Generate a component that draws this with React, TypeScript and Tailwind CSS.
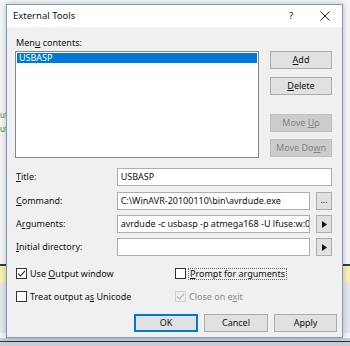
import type { ReactNode } from "react";

const font = { fontFamily: '"Noto Sans", "Open Sans", sans-serif' };

function Btn({ children, disabled, primary, className = "" }: { children: ReactNode; disabled?: boolean; primary?: boolean; className?: string }) {
  const tone = disabled
    ? "border-[#bfbfbf] bg-[#cccccc] text-[#838383]"
    : primary
      ? "border-[#0078d7] bg-[#e1e1e1] text-[#111]"
      : "border-[#adadad] bg-[#e1e1e1] text-[#111]";
  return (
    <div className={`flex h-[18px] items-center justify-center border text-[9px] ${tone} ${className}`}>
      {children}
    </div>
  );
}

function Check({ checked, disabled }: { checked?: boolean; disabled?: boolean }) {
  return (
    <div
      className={`flex h-[11px] w-[11px] shrink-0 items-center justify-center border ${
        disabled ? "border-[#d0d0d0] bg-[#f0f0f0]" : "border-[#333] bg-white"
      }`}
    >
      {checked && (
        <svg width="9" height="9" viewBox="0 0 9 9">
          <path d="M1 4.6 L3.4 7 L8 1.8" fill="none" stroke={disabled ? "#a8a8a8" : "#222"} strokeWidth="1.1" />
        </svg>
      )}
    </div>
  );
}

function Arrow() {
  return (
    <svg width="5" height="7" viewBox="0 0 5 7">
      <path d="M0 0 L5 3.5 L0 7 Z" fill="#111" />
    </svg>
  );
}

function Row({ label, children, className = "" }: { label: ReactNode; children: ReactNode; className?: string }) {
  return (
    <div className={`flex h-[18px] items-center ${className}`}>
      <div className="w-[102px] pl-[1px] text-[9px] text-[#111]">{label}</div>
      {children}
    </div>
  );
}

function Field({ value, className = "" }: { value?: string; className?: string }) {
  return (
    <div className={`flex h-[18px] items-center overflow-hidden whitespace-nowrap border border-[#abadb3] bg-white pl-[3px] text-[9px] text-[#111] ${className}`}>
      {value}
    </div>
  );
}

export default function App() {
  return (
    <div className="relative h-[346px] w-[350px] overflow-hidden bg-[#f5f6f7]" style={font}>
      {/* background app behind the dialog */}
      <div className="absolute left-0 top-[110px] h-[10px] text-[8px] leading-[10px] text-[#3a8a3a]">ut</div>
      <div className="absolute left-0 top-[124px] h-[10px] text-[8px] leading-[10px] text-[#3a8a3a]">ut</div>
      <div className="absolute left-0 right-0 top-[264px] h-[2px] bg-[#333a45]" />
      <div className="absolute left-0 right-0 top-[266px] h-[17px] bg-[#fbf0b0]" />
      <div className="absolute left-0 right-0 top-[283px] h-[50px] bg-[#e4e8ee]" />
      <div className="absolute bottom-0 left-0 right-0 h-[8px] bg-[#c9ced6]" />
      <div className="absolute bottom-[4px] left-0 right-0 h-[1px] bg-[#2d3540]" />

      {/* dialog window */}
      <div className="absolute left-[6px] top-[4px] flex h-[334px] w-[337px] flex-col border border-[#7a9bc9] bg-[#f0f0f0] shadow-[0_0_6px_rgba(0,0,0,0.25)]">
        <div className="flex h-[22px] shrink-0 items-center bg-white text-[9.5px] text-[#111]">
          <span className="pl-[6px]">External Tools</span>
          <span className="ml-auto w-[10px] text-center">?</span>
          <svg className="ml-[24px] mr-[12px]" width="10" height="10" viewBox="0 0 10 10">
            <path d="M0.5 0.5 L9.5 9.5 M9.5 0.5 L0.5 9.5" stroke="#222" strokeWidth="1" />
          </svg>
        </div>

        <div className="flex flex-col pl-[8px] pr-[10px]">
          <div className="mt-[10px] h-[12px] pl-[1px] text-[9px] leading-[12px] text-[#111]">
            Men<u>u</u> contents:
          </div>
          <div className="mt-[2px] flex">
            <div className="h-[107px] w-[244px] border border-[#828790] bg-white p-[1px]">
              <div className="flex h-[10px] items-center bg-[#0078d7] pl-[2px] text-[9px] text-white">USBASP</div>
            </div>
            <div className="ml-[11px] flex w-[62px] flex-col">
              <Btn><span><u>A</u>dd</span></Btn>
              <Btn className="mt-[8px]"><span><u>D</u>elete</span></Btn>
              <Btn disabled className="mt-[19px]"><span>Move <u>U</u>p</span></Btn>
              <Btn disabled className="mt-[7px]"><span>Move Do<u>w</u>n</span></Btn>
            </div>
          </div>

          <Row className="mt-[10px]" label={<span><u>T</u>itle:</span>}>
            <Field value="USBASP" className="w-[216px]" />
          </Row>
          <Row className="mt-[6px]" label={<span><u>C</u>ommand:</span>}>
            <Field value="C:\WinAVR-20100110\bin\avrdude.exe" className="w-[194px]" />
            <Btn className="ml-[6px] w-[16px]"><span className="-mt-[3px]">...</span></Btn>
          </Row>
          <Row className="mt-[5px]" label={<span>A<u>r</u>guments:</span>}>
            <Field value="avrdude -c usbasp -p atmega168 -U lfuse:w:0x26" className="w-[194px]" />
            <Btn className="ml-[6px] w-[16px]"><Arrow /></Btn>
          </Row>
          <Row className="mt-[5px]" label={<span><u>I</u>nitial directory:</span>}>
            <Field className="w-[194px]" />
            <Btn className="ml-[6px] w-[16px]"><Arrow /></Btn>
          </Row>

          <div className="mt-[11px] grid grid-cols-[159px_1fr] gap-y-[9px] pl-[1px] text-[9px] text-[#111]">
            <div className="flex items-center gap-[3px]">
              <Check checked />
              <span>Use <u>O</u>utput window</span>
            </div>
            <div className="flex items-center gap-[2px]">
              <Check />
              <span className="border border-dotted border-[#666] px-[1px] leading-[10px]"><u>P</u>rompt for arguments</span>
            </div>
            <div className="flex items-center gap-[3px]">
              <Check />
              <span>Treat output a<u>s</u> Unicode</span>
            </div>
            <div className="flex items-center gap-[3px] text-[#8d8d8d]">
              <Check checked disabled />
              <span>Close on e<u>x</u>it</span>
            </div>
          </div>

          <div className="mr-[-5px] mt-[11px] flex justify-end gap-[6px]">
            <Btn primary className="w-[64px] border-2">OK</Btn>
            <Btn className="w-[64px]">Cancel</Btn>
            <Btn className="w-[63px]">Apply</Btn>
          </div>
        </div>
      </div>
    </div>
  );
}
